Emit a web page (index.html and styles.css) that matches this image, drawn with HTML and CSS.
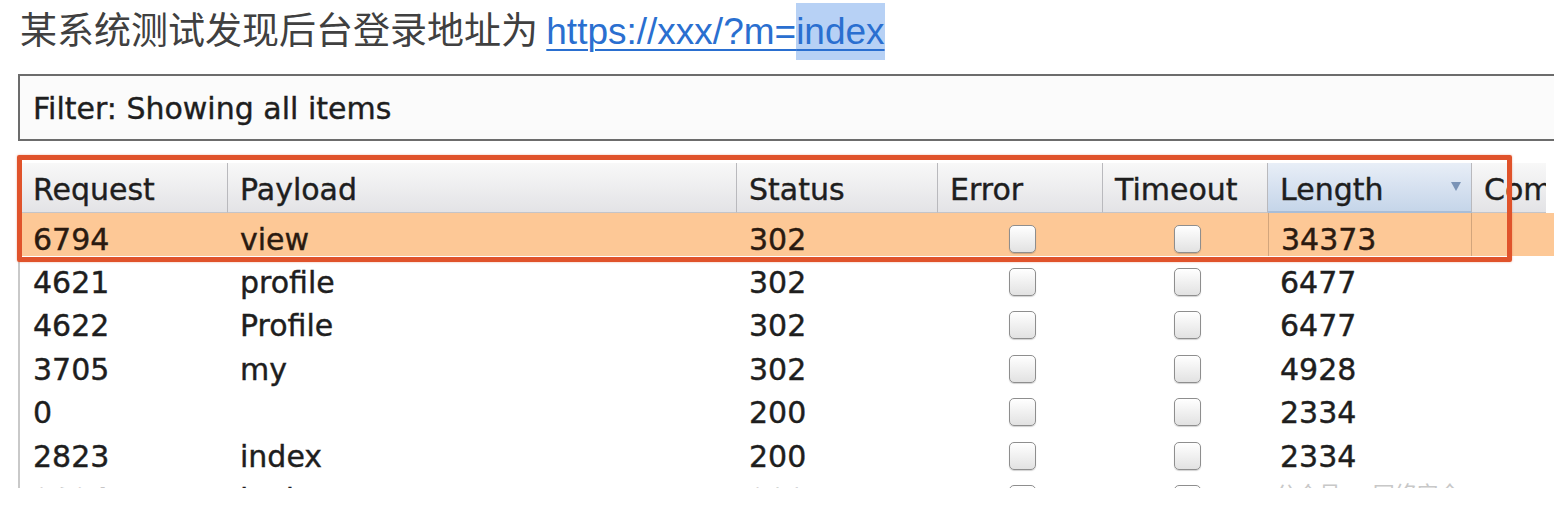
FILE: index.html
```html
<!DOCTYPE html>
<html lang="zh">
<head>
<meta charset="utf-8">
<link rel="stylesheet" href="styles.css">
</head>
<body>
<div class="page">
  <div class="title">某系统测试发现后台登录地址为 <a class="link">https://xxx/?m=<span class="sel">index</span></a></div>
  <div class="filter">Filter: Showing all items</div>
  <div class="table-wrap">
    <div class="table">
      <div class="row head">
        <div class="cell first">Request</div>
        <div class="cell">Payload</div>
        <div class="cell">Status</div>
        <div class="cell">Error</div>
        <div class="cell">Timeout</div>
        <div class="cell sorted"><span>Length</span><svg class="arrow" width="10" height="9" viewBox="0 0 10 9"><path d="M0 0 H10 L5 9 Z" fill="#7a93b6"/></svg></div>
        <div class="cell">Com</div>
      </div>
      <div class="row selected">
        <div class="cell first">6794</div>
        <div class="cell">view</div>
        <div class="cell">302</div>
        <div class="cell box"><span class="cb"></span></div>
        <div class="cell box"><span class="cb"></span></div>
        <div class="cell focus">34373</div>
        <div class="cell"></div>
      </div>
      <div class="row">
        <div class="cell first">4621</div>
        <div class="cell">profile</div>
        <div class="cell">302</div>
        <div class="cell box"><span class="cb"></span></div>
        <div class="cell box"><span class="cb"></span></div>
        <div class="cell">6477</div>
        <div class="cell"></div>
      </div>
      <div class="row">
        <div class="cell first">4622</div>
        <div class="cell">Profile</div>
        <div class="cell">302</div>
        <div class="cell box"><span class="cb"></span></div>
        <div class="cell box"><span class="cb"></span></div>
        <div class="cell">6477</div>
        <div class="cell"></div>
      </div>
      <div class="row">
        <div class="cell first">3705</div>
        <div class="cell">my</div>
        <div class="cell">302</div>
        <div class="cell box"><span class="cb"></span></div>
        <div class="cell box"><span class="cb"></span></div>
        <div class="cell">4928</div>
        <div class="cell"></div>
      </div>
      <div class="row">
        <div class="cell first">0</div>
        <div class="cell"></div>
        <div class="cell">200</div>
        <div class="cell box"><span class="cb"></span></div>
        <div class="cell box"><span class="cb"></span></div>
        <div class="cell">2334</div>
        <div class="cell"></div>
      </div>
      <div class="row">
        <div class="cell first">2823</div>
        <div class="cell">index</div>
        <div class="cell">200</div>
        <div class="cell box"><span class="cb"></span></div>
        <div class="cell box"><span class="cb"></span></div>
        <div class="cell">2334</div>
        <div class="cell"></div>
      </div>
      <div class="row">
        <div class="cell first">2824</div>
        <div class="cell">login</div>
        <div class="cell">200</div>
        <div class="cell box"><span class="cb"></span></div>
        <div class="cell box"><span class="cb"></span></div>
        <div class="cell"></div>
        <div class="cell"></div>
      </div>
      <div class="watermark">公众号 · 网络安全</div>
    </div>
    <div class="redbox"></div>
  </div>
</div>
</body>
</html>
```
FILE: styles.css
```css
* { box-sizing: border-box; }
html, body { margin: 0; padding: 0; background: #ffffff; }
.page { width: 1554px; height: 523px; overflow: hidden; }

.title {
  height: 57px;
  padding-left: 20px;
  font-family: "Noto Sans CJK SC", sans-serif;
  font-size: 37px;
  line-height: 57px;
  color: #404040;
  white-space: nowrap;
}
.link {
  font-family: "Liberation Sans", Arial, sans-serif;
  color: #2a6fd0;
  text-decoration: underline;
  text-decoration-thickness: 2px;
  text-underline-offset: 5px;
}
.sel {
  display: inline-block;
  background: #b7d1f5;
  line-height: 57px;
  text-decoration: underline;
  text-decoration-thickness: 2px;
  text-underline-offset: 5px;
  text-decoration-color: #2a6fd0;
}

.filter {
  margin: 17px 0 0 18px;
  height: 67px;
  border: 2px solid #6c6c6c;
  border-right: none;
  background: #fbfbfb;
  padding: 3px 0 0 13px;
  font-family: "DejaVu Sans", sans-serif;
  font-size: 30px;
  line-height: 60px;
  color: #1e1e1e;
  -webkit-text-stroke: 0.4px #1e1e1e;
}

.table-wrap {
  position: relative;
  margin: 22px 0 0 18px;
}
.table {
  position: relative;
  height: 325px;
  overflow: hidden;
  border-left: 2px solid #c9c9c9;
  font-family: "DejaVu Sans", sans-serif;
  font-size: 30px;
  color: #1e1e1e;
  -webkit-text-stroke: 0.4px #1e1e1e;
}
.row {
  display: grid;
  grid-template-columns: 208px 509px 201px 165px 165px 204px 74px;
  height: 43.4px;
}
.cell {
  padding: 11.6px 0 0 12px;
  line-height: 30px;
  white-space: nowrap;
  overflow: hidden;
}
.cell.first { padding-left: 13px; }

.head { height: 50px; }
.head .cell {
  background: linear-gradient(#f8f8f8, #e3e3e6);
  border-right: 1px solid #b9b9bd;
  border-bottom: 1px solid #c4c4c8;
}
.head .cell:last-child { border-right: none; }
.head .sorted {
  background: linear-gradient(#e8eef7, #c5d5e9);
  border-bottom: 2px solid #a9bdd6;
  display: flex;
  justify-content: space-between;
  padding-right: 10px;
}
.arrow { margin-top: 7px; }

.selected { background: #fdc896; }
.selected .cell { color: #2a1a10; -webkit-text-stroke-color: #2a1a10; }
.selected .focus {
  border-left: 1px solid #d2a57c;
  border-right: 1px solid #d2a57c;
}

.box { padding-left: 0; display: flex; justify-content: center; }
.box .cb {
  display: block;
  width: 27px;
  height: 28px;
  margin-left: 3px;
  border: 1.5px solid #8e8e8e;
  border-radius: 5px;
  background: linear-gradient(#ffffff, #e2e2e2);
  box-shadow: 0 1px 1px rgba(0,0,0,0.18);
}

.watermark {
  position: absolute;
  left: 1255px;
  top: 313px;
  font-family: "Noto Sans CJK SC", sans-serif;
  font-size: 22px;
  color: #c8c8c8;
  -webkit-text-stroke: 0;
}

.redbox {
  position: absolute;
  left: -1px;
  top: -8px;
  width: 1495px;
  height: 107px;
  border: 5px solid #e0532b;
  border-radius: 2px;
  box-shadow: 0 0 2px rgba(224,83,43,0.5);
  pointer-events: none;
}
```
